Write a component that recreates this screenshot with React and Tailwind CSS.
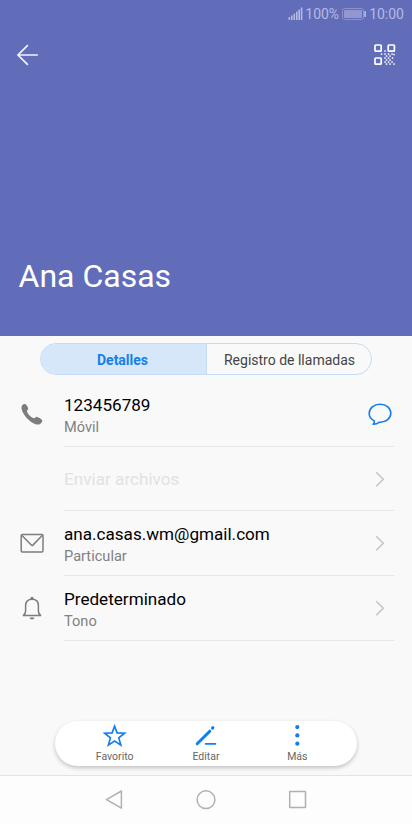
import React from 'react';

const BackIcon = () => (
  <svg width="24" height="24" viewBox="0 0 24 24" fill="none" stroke="#f1f2fa" strokeWidth="1.7">
    <path d="M22.8 12H3M12.9 2.2L3 12l9.9 9.8" />
  </svg>
);

const qrDots = [
  [11, 7], [7.5, 10], [11, 10], [14.5, 10], [18, 10],
  [12.5, 12], [16, 12], [11, 14], [14.5, 14], [18.5, 14],
  [12.5, 16], [16, 16], [11, 18], [14.5, 18], [18, 18],
  [12.5, 20], [16, 20], [20, 10.5], [20, 20],
];

const QrIcon = () => (
  <svg width="22" height="22" viewBox="0 0 22 22" fill="none" stroke="white" strokeWidth="1.7">
    <rect x="1" y="1" width="6.2" height="6.2" rx="0.8" />
    <rect x="14.2" y="1" width="6.2" height="6.2" rx="0.8" />
    <rect x="1" y="14" width="6.2" height="6.2" rx="0.8" />
    {qrDots.map(([x, y], i) => (
      <rect key={i} x={x - 0.7} y={y - 0.7} width="1.5" height="1.5" fill="white" stroke="none" />
    ))}
  </svg>
);

const PhoneIcon = () => (
  <svg width="24" height="24" viewBox="0 0 24 24" fill="#7d7d7d">
    <path d="M2 3.4C2.9 2.2 4.6 1.5 5.5 2.2C6.6 3 7.8 5 8.2 6.3C8.5 7.5 6.8 8.4 7 9.4C7.5 11.8 11.8 15.9 14.1 16.2C15.2 16.3 15.7 14.5 17.2 14.9C18.8 15.3 21.3 16.8 22.1 18.1C22.9 19.5 21.3 21.5 19.9 22.2C16.5 23.6 11.5 20.7 8 17.2C4.1 13.2 0 6.8 2 3.4Z" />
  </svg>
);

const MailIcon = () => (
  <svg width="24" height="24" viewBox="0 0 24 24" fill="none" stroke="#7d7d7d" strokeWidth="1.5">
    <rect x="1.2" y="3.4" width="21.8" height="17.6" rx="1.2" />
    <path d="M2 4.5L11.3 14.1Q12.1 14.9 12.9 14.1L22.2 4.5" />
  </svg>
);

const BellIcon = () => (
  <svg width="24" height="24" viewBox="0 0 24 24" fill="none" stroke="#7d7d7d" strokeWidth="1.5">
    <path d="M3 19.6C5.3 18.4 5.6 17 5.6 14.7V9.7C5.6 5.4 8.2 3.3 12 3.3S18.4 5.4 18.4 9.7V14.7C18.4 17 18.7 18.4 21 19.6Z" />
    <circle cx="12" cy="2.4" r="1.6" fill="#7d7d7d" stroke="none" />
    <path d="M9.6 21.4H14.4A2.4 2 0 0 1 9.6 21.4Z" fill="#7d7d7d" stroke="none" />
  </svg>
);

const MessageIcon = () => (
  <svg width="24" height="24" viewBox="0 0 24 24" fill="none" stroke="#137fe6" strokeWidth="1.6" strokeLinejoin="round">
    <path d="M5.1 22.3C6.3 21.3 6.6 20.4 6.3 18.9C3.1 17.3 1.2 14.7 1.2 11.5C1.2 6.3 5.8 2.3 12.1 2.3S22.8 6.3 22.8 11.3S18.2 20.2 12.2 20.2H11.4C9.6 21.7 7.4 22.4 5.1 22.3Z" />
  </svg>
);

const ChevronIcon = () => (
  <svg width="24" height="24" viewBox="0 0 24 24" fill="none" stroke="#c6c6c6" strokeWidth="1.6">
    <path d="M8.2 5.2L15.3 12.2L8.2 19.2" />
  </svg>
);

const StarIcon = () => (
  <svg width="24" height="24" viewBox="0 0 24 24" fill="none" stroke="#127ff0" strokeWidth="1.7">
    <path d="M11.6 2.2L14.1 8.9L21.6 9.2L15.8 13.9L17.8 21.1L11.6 17L5.4 21.1L7.4 13.9L1.6 9.2L9.1 8.9Z" />
  </svg>
);

const EditIcon = () => (
  <svg width="24" height="24" viewBox="0 0 24 24" fill="none" stroke="#127ff0" strokeLinecap="round">
    <path d="M3.2 19.8L15.8 7.2" strokeWidth="3" />
    <path d="M18.5 4.1L18.9 3.7" strokeWidth="3.1" />
    <path d="M11.6 19.8H21.4" strokeWidth="1.8" />
  </svg>
);

const MoreIcon = () => (
  <svg width="24" height="24" viewBox="0 0 24 24" fill="#137fe6">
    <circle cx="12.3" cy="3.1" r="2.1" />
    <circle cx="12.3" cy="11.4" r="2.1" />
    <circle cx="12.3" cy="19.7" r="2.1" />
  </svg>
);

const StatusBar = () => (
  <div className="flex h-7 items-center justify-end pr-2 text-sm text-[#b6bae1]">
    <svg width="15" height="14" viewBox="0 0 15 14" fill="#b6bae1">
      <rect x="0.6" y="10" width="1.5" height="3" />
      <rect x="3" y="8.5" width="1.6" height="4.5" />
      <rect x="5.5" y="6.6" width="1.6" height="6.4" />
      <rect x="8" y="4.6" width="1.6" height="8.4" />
      <rect x="10.4" y="2.5" width="1.6" height="10.5" />
      <rect x="12.8" y="0.5" width="1.6" height="12.5" />
    </svg>
    <span className="ml-[2px]">100%</span>
    <svg className="ml-[2px]" width="26" height="14" viewBox="0 0 26 14">
      <rect x="1.5" y="1.5" width="21" height="11" rx="2.2" fill="none" stroke="#8a91cd" />
      <rect x="3" y="3" width="18" height="8" rx="0.8" fill="#9298cf" />
      <rect x="23.2" y="4" width="1.7" height="6" rx="0.6" fill="#b6bae1" />
    </svg>
    <span className="ml-[2px]">10:00</span>
  </div>
);

const rows = [
  { title: '123456789', subtitle: 'Móvil', icon: PhoneIcon, action: MessageIcon, height: 'h-[65px]' },
  { title: 'Enviar archivos', disabled: true, action: ChevronIcon, height: 'h-16' },
  { title: 'ana.casas.wm@gmail.com', subtitle: 'Particular', icon: MailIcon, action: ChevronIcon, height: 'h-[65px]' },
  { title: 'Predeterminado', subtitle: 'Tono', icon: BellIcon, action: ChevronIcon, height: 'h-[65px]' },
];

const DetailRow = ({ title, subtitle, icon: Icon, action: Action, height, disabled }) => (
  <div className={`flex pl-5 pr-[18px] ${height}`}>
    <div className="flex w-11 shrink-0 items-center pb-px">{Icon && <Icon />}</div>
    <div className="flex flex-1 items-center justify-between border-b border-[#e6e6e6] pr-[2px]">
      <div className="pt-px">
        <p className={disabled ? 'text-[17.15px] leading-6 text-[#e2e2e2]' : 'text-[17.1px] leading-6 text-black'}>{title}</p>
        {subtitle && <p className="text-[14.6px] leading-5 text-[#818181]">{subtitle}</p>}
      </div>
      <Action />
    </div>
  </div>
);

const actions = [
  { label: 'Favorito', icon: StarIcon },
  { label: 'Editar', icon: EditIcon },
  { label: 'Más', icon: MoreIcon },
];

export default function App() {
  return (
    <div className="flex h-[824px] w-[412px] flex-col overflow-hidden bg-[#f9f9f9] font-['Roboto',sans-serif]">
      <header className="flex h-[336px] shrink-0 flex-col bg-[#616db9]">
        <StatusBar />
        <div className="flex h-[54px] items-center justify-between pl-[15px] pr-4">
          <BackIcon />
          <QrIcon />
        </div>
        <h1 className="mt-auto mb-10 pl-[18.5px] text-[32px] leading-10 text-white">Ana Casas</h1>
      </header>

      {/* Tabs */}
      <div className="mx-10 mt-[7px] flex h-8 shrink-0 overflow-hidden rounded-full border border-[#c4dcf5] text-sm">
        <button className="w-[166px] border-r border-[#c4dcf5] bg-[#d5e7f9] pt-[2px] pr-[2px] font-bold text-[#147feb]">Detalles</button>
        <button className="flex-1 pt-[2px] pl-px text-[#444444]">Registro de llamadas</button>
      </div>

      <main className="mt-[7px] flex-1">
        {rows.map((row) => (
          <DetailRow key={row.title} {...row} />
        ))}
      </main>

      {/* Floating actions */}
      <div className="ml-[55px] mb-[9px] flex h-[45px] w-[302px] shrink-0 rounded-full bg-white px-[14px] shadow-[0_2px_4px_rgba(0,0,0,0.22)]">
        {actions.map(({ label, icon: Icon }) => (
          <button key={label} className="flex flex-1 flex-col items-center pt-[3px]">
            <Icon />
            <span className="mt-[3px] text-[10.5px] leading-3 text-[#666666]">{label}</span>
          </button>
        ))}
      </div>

      {/* System navigation */}
      <nav className="flex h-[49px] shrink-0 items-center border-t border-[#e3e3e3] bg-[#fdfdfd] px-[68px]">
        <div className="flex flex-1 justify-center">
          <svg width="20" height="20" viewBox="0 0 20 20" fill="none" stroke="#b0b0b0" strokeWidth="1.5" strokeLinejoin="round">
            <path d="M2.5 9.6L17.4 1V18.2Z" />
          </svg>
        </div>
        <div className="flex flex-1 justify-center">
          <svg width="20" height="20" viewBox="0 0 20 20" fill="none" stroke="#b0b0b0" strokeWidth="1.5">
            <circle cx="10" cy="9.7" r="8.9" />
          </svg>
        </div>
        <div className="flex flex-1 justify-center">
          <svg width="20" height="20" viewBox="0 0 20 20" fill="none" stroke="#b0b0b0" strokeWidth="1.5">
            <rect x="1.7" y="1.6" width="15.8" height="15.8" rx="0.5" />
          </svg>
        </div>
      </nav>
    </div>
  );
}
